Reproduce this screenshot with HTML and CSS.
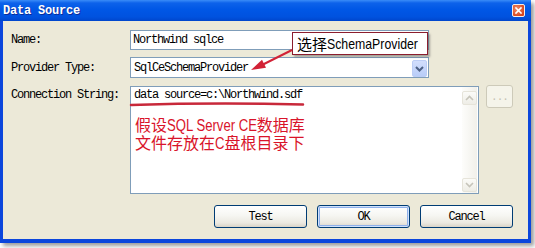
FILE: index.html
```html
<!DOCTYPE html>
<html>
<head>
<meta charset="utf-8">
<link rel="stylesheet" href="styles.css">
</head>
<body>
<div class="window">
  <div class="titlebar">
    <span class="title">Data Source</span>
    <span class="close"><svg width="11" height="11" viewBox="0 0 11 11"><path d="M3 3 L8 8 M8 3 L3 8" stroke="#fff" stroke-width="1.6" stroke-linecap="square"/></svg></span>
  </div>
  <div class="client">
    <div class="form">
      <div class="lbl">Name:</div>
      <div class="input">Northwind sqlce</div>
      <div></div>
      <div class="lbl">Provider Type:</div>
      <div class="combo"><span class="combo-text">SqlCeSchemaProvider</span><span class="dd"><svg width="13" height="15" viewBox="0 0 13 15"><path d="M3 6 L6.5 9.5 L10 6" fill="none" stroke="#4d6185" stroke-width="2"/></svg></span></div>
      <div></div>
      <div class="lbl lbl-top">Connection String:</div>
      <div class="ta">
        <div class="ta-text">data source=c:\Northwind.sdf</div>
        <div class="note"><div class="note-line">假设<span class="lat lat-sql">SQL Server CE</span>数据库</div><div class="note-line">文件存放在<span class="lat lat-c">C</span>盘根目录下</div></div>
        <div class="vscroll">
          <span class="sb-btn"><svg width="9" height="6" viewBox="0 0 9 6"><path d="M1 5 L4.5 1.5 L8 5" fill="none" stroke="#c6c4ba" stroke-width="1.6"/></svg></span>
          <span class="sb-btn"><svg width="9" height="6" viewBox="0 0 9 6"><path d="M1 1 L4.5 4.5 L8 1" fill="none" stroke="#c6c4ba" stroke-width="1.6"/></svg></span>
        </div>
      </div>
      <div class="browse">...</div>
    </div>
    <div class="buttons">
      <div class="btn">Test</div>
      <div class="btn btn-default">OK</div>
      <div class="btn">Cancel</div>
    </div>
  </div>
  <div class="callout">选择<span class="lat lat-sp">SchemaProvider</span></div>
  <svg class="annot" width="535" height="248" viewBox="0 0 535 248">
    <line x1="292" y1="50" x2="263" y2="64.5" stroke="#d22236" stroke-width="2"/>
    <polygon points="251,70 266,67.8 262,59.8" fill="#d22236"/>
    <path d="M131 105 Q 215 102.5 303 104.5" fill="none" stroke="#c8283a" stroke-width="2.5" stroke-linecap="round"/>
  </svg>
</div>
</body>
</html>
```

FILE: styles.css
```css
html, body {
  margin: 0;
  padding: 0;
  background: #ffffff;
}
body {
  width: 535px;
  height: 248px;
  overflow: hidden;
  font-family: "Liberation Mono", monospace;
  font-size: 12px;
  color: #000;
}
.window {
  position: relative;
  width: 531px;
  height: 243px;
  display: flex;
  flex-direction: column;
  background: #0b46dc;
  box-shadow: 3px 3px 4px rgba(60, 60, 60, 0.5);
}
.titlebar {
  height: 21px;
  flex: none;
  display: flex;
  align-items: center;
  justify-content: space-between;
  padding: 0 6px 0 3px;
  background: linear-gradient(#3a8cf8 0, #0d62ea 3px, #0057e6 45%, #0052df 80%, #0046cc 100%);
}
.title {
  color: #fff;
  font-weight: bold;
  font-size: 12px;
  letter-spacing: -0.2px;
  text-shadow: 1px 1px 0 #0a2c9a;
}
.close {
  width: 13px;
  height: 13px;
  box-sizing: border-box;
  border: 1px solid #f4ece8;
  border-radius: 2px;
  background: radial-gradient(circle at 35% 35%, #f08a66, #d5461f 75%);
  display: flex;
  align-items: center;
  justify-content: center;
}
.client {
  flex: 1;
  margin: 0 3px 4px 3px;
  background: #ece9d8;
  display: flex;
  flex-direction: column;
  padding: 9px 15px 11px 8px;
}
.form {
  display: grid;
  grid-template-columns: 112px 349px 27px;
  grid-template-rows: 20px 21px 109px;
  column-gap: 7px;
  row-gap: 7px;
}
.lbl {
  font-size: 12px;
  letter-spacing: -1.2px;
  line-height: 14px;
  align-self: center;
  white-space: nowrap;
}
.lbl-top {
  align-self: start;
  padding-top: 3px;
}
.input {
  width: 299px;
  height: 20px;
  box-sizing: border-box;
  border: 1px solid #7f9db9;
  background: #fff;
  padding: 0 2px;
  line-height: 18px;
  letter-spacing: -1.2px;
  white-space: nowrap;
}
.combo {
  width: 299px;
  height: 21px;
  box-sizing: border-box;
  border: 1px solid #7f9db9;
  background: #fff;
  display: flex;
  align-items: center;
  justify-content: space-between;
  padding-left: 3px;
}
.combo-text {
  letter-spacing: -1.2px;
  white-space: nowrap;
}
.dd {
  width: 15px;
  height: 17px;
  box-sizing: border-box;
  margin-right: 1px;
  margin-top: 1px;
  border: 1px solid #bccdf5;
  border-radius: 2px;
  background: linear-gradient(#d2defc, #b9cdf8);
  display: flex;
  align-items: center;
  justify-content: center;
}
.ta {
  position: relative;
  margin-top: 1px;
  height: 108px;
  box-sizing: border-box;
  border: 1px solid #7f9db9;
  background: #fff;
  padding: 1px 3px;
}
.ta-text {
  line-height: 14px;
  letter-spacing: -1.2px;
  white-space: nowrap;
}
.note {
  margin-top: 13px;
  margin-left: 1px;
  color: #d9142a;
  font-family: "Noto Sans CJK SC", sans-serif;
  font-size: 16px;
}
.note-line {
  height: 18px;
  line-height: 18px;
  white-space: nowrap;
}
.lat {
  display: inline-block;
  font-family: "Liberation Sans", sans-serif;
  font-size: 16px;
  line-height: 14px;
  transform: scaleX(0.82);
  transform-origin: 0 50%;
}
.lat-sql {
  margin-right: -20px;
}
.lat-c {
  margin-right: -2px;
}
.lat-sp {
  font-size: 15px;
  margin-right: -20px;
}
.vscroll {
  position: absolute;
  top: 0;
  right: 1px;
  bottom: 0;
  width: 15px;
  background: linear-gradient(to right, #fdfdfb, #f1f0ea);
  display: flex;
  flex-direction: column;
  justify-content: space-between;
  padding: 4px 0 1px;
  box-sizing: border-box;
}
.sb-btn {
  height: 14px;
  box-sizing: border-box;
  border: 1px solid #e6e4da;
  border-radius: 2px;
  background: linear-gradient(#fbfbf8, #eeede6);
  display: flex;
  align-items: center;
  justify-content: center;
}
.browse {
  width: 27px;
  height: 23px;
  box-sizing: border-box;
  border: 1px solid #cdcab9;
  border-radius: 3px;
  background: #f5f4ea;
  color: #c4c1b2;
  font-size: 11px;
  letter-spacing: -1px;
  display: flex;
  align-items: center;
  justify-content: center;
}
.buttons {
  margin-top: 11px;
  display: flex;
  justify-content: flex-end;
  gap: 10px;
}
.btn {
  width: 93px;
  height: 23px;
  box-sizing: border-box;
  border: 1px solid #003c74;
  border-radius: 3px;
  background: linear-gradient(#ffffff 0%, #f6f6f2 45%, #ebe9e1 80%, #d8d3c7 100%);
  display: flex;
  align-items: center;
  justify-content: center;
  letter-spacing: -1.2px;
}
.btn-default {
  box-shadow: inset 0 0 0 1px #cfe1fb, inset 0 0 0 2px #8fb0ea;
}
.callout {
  position: absolute;
  left: 292px;
  top: 32px;
  width: 136px;
  height: 23px;
  box-sizing: border-box;
  border: 1px solid #8b1d2e;
  background: #fff;
  box-shadow: 2px 2px 2px rgba(90, 90, 90, 0.5);
  padding-left: 4px;
  display: flex;
  align-items: center;
  white-space: nowrap;
  color: #000;
  font-family: "Noto Sans CJK SC", sans-serif;
  font-size: 15px;
}
.annot {
  position: absolute;
  left: 0;
  top: 0;
  pointer-events: none;
}
```
